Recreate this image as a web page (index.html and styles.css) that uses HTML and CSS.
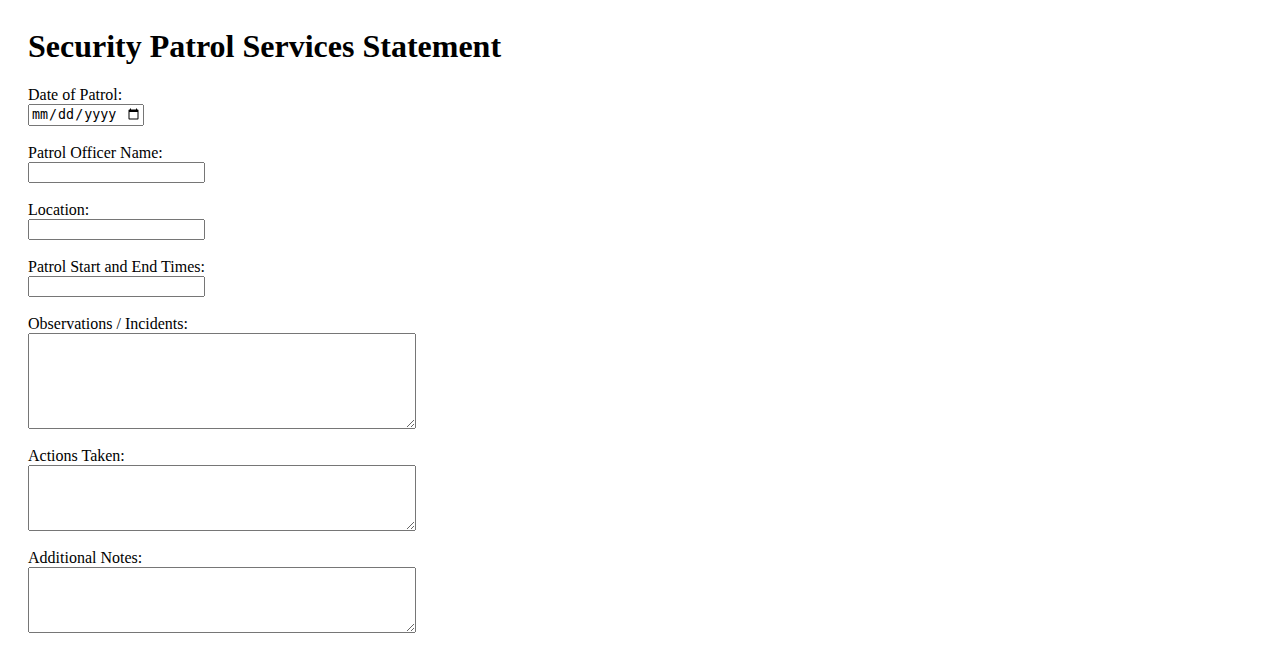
FILE: index.html
```html
<!DOCTYPE html>
<html lang="en">
<head>
<meta charset="utf-8">
<title>Security Patrol Services Statement</title>
<link rel="stylesheet" href="styles.css">
</head>
<body>
<h1 class="title">Security Patrol Services Statement</h1>
<form class="form">
  <div class="field">
    <label class="label" for="date">Date of Patrol:</label>
    <input class="date-input" type="date" id="date">
  </div>
  <div class="field">
    <label class="label" for="officer">Patrol Officer Name:</label>
    <input class="text-input" type="text" id="officer">
  </div>
  <div class="field">
    <label class="label" for="location">Location:</label>
    <input class="text-input" type="text" id="location">
  </div>
  <div class="field">
    <label class="label" for="times">Patrol Start and End Times:</label>
    <input class="text-input" type="text" id="times">
  </div>
  <div class="field">
    <label class="label" for="obs">Observations / Incidents:</label>
    <textarea class="area area-tall" id="obs"></textarea>
  </div>
  <div class="field">
    <label class="label" for="actions">Actions Taken:</label>
    <textarea class="area area-short" id="actions"></textarea>
  </div>
  <div class="field">
    <label class="label" for="notes">Additional Notes:</label>
    <textarea class="area area-short" id="notes"></textarea>
  </div>
</form>
</body>
</html>
```

FILE: styles.css
```css
html, body {
  background: #ffffff;
}
body {
  margin: 0;
  padding: 28px;
  font-family: "Liberation Serif", "Times New Roman", serif;
  font-size: 16px;
  color: #000;
}
.title {
  font-size: 32px;
  font-weight: bold;
  margin: 0 0 21px;
}
.form {
  margin: 0;
}
.field {
  margin-bottom: 18px;
}
.label {
  display: block;
  line-height: 18px;
  margin-bottom: 0;
}
.date-input {
  display: block;
  box-sizing: border-box;
  width: 116px;
  height: 22px;
  margin: 0;
}
.text-input {
  display: block;
  box-sizing: border-box;
  width: 177px;
  height: 21px;
  margin: 0;
}
.area {
  display: block;
  box-sizing: border-box;
  width: 388px;
  margin: 0;
}
.area-tall {
  height: 96px;
}
.area-short {
  height: 66px;
}
```
